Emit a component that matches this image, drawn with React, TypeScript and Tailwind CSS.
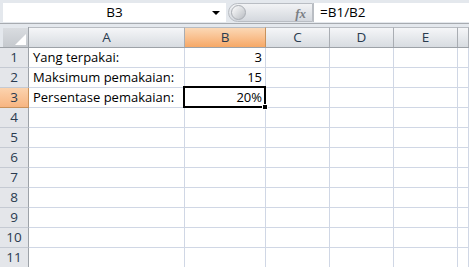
const cols = [
  { name: "A", w: "w-[156px]" },
  { name: "B", w: "w-[81px]" },
  { name: "C", w: "w-[64px]" },
  { name: "D", w: "w-[64px]" },
  { name: "E", w: "w-[64px]" },
  { name: "", w: "flex-1" },
];

const data: Record<number, string[]> = {
  1: ["Yang terpakai:", "3"],
  2: ["Maksimum pemakaian:", "15"],
  3: ["Persentase pemakaian:", "20%"],
};

function Toolbar() {
  return (
    <div className="h-[27px] bg-[#e4e8ed] flex flex-col">
      <div className="flex h-[24px] pt-[3px] border-b border-[#a7abb0]">
        <div className="ml-[3px] w-[223px] h-[19px] bg-white relative flex items-center justify-center text-[13.5px] text-black">
          B3
          <span className="absolute right-[6px] top-[8px] w-0 h-0 border-l-[4px] border-r-[4px] border-t-[4px] border-l-transparent border-r-transparent border-t-black" />
        </div>
        <div className="ml-[2px] w-[85px] h-[19px] flex items-center rounded-l-full bg-gradient-to-b from-[#f2f3f5] to-[#d4d8de] border border-[#b9bdc3] relative">
          <span className="ml-[2px] w-[15px] h-[15px] rounded-full bg-gradient-to-br from-[#ffffff] to-[#b8bcc2] border border-[#a9adb3]" />
          <span className="absolute right-[6px] top-[0px] text-[13px] italic font-bold text-[#7a7e84] font-['Liberation_Serif',serif]">
            fx
          </span>
        </div>
        <div className="flex-1 h-[19px] bg-white border-l border-[#b9bdc3] pl-[6px] flex items-center text-[13.5px] text-black">
          =B1/B2
        </div>
      </div>
    </div>
  );
}

function HeaderRow() {
  return (
    <div className="flex h-[21px] border-b border-[#9da2a8]">
      <div className="w-[29px] border-r border-[#9da2a8] bg-[#e4e8ed] pl-[3px] pt-[1px]">
        <div className="w-full h-full bg-gradient-to-b from-[#d9dce0] to-[#c5c9ce] relative overflow-hidden">
          <span className="absolute right-[2px] bottom-[2px] w-0 h-0 border-b-[11px] border-b-white border-l-[11px] border-l-transparent" />
        </div>
      </div>
      {cols.map((c, i) => (
        <div
          key={i}
          className={`${c.w} flex items-center justify-center border-r border-t border-t-[#b8bcc2] text-[13.5px] text-[#2a3b4f] ${
            c.name === "B"
              ? "bg-gradient-to-b from-[#fbd8b5] to-[#f6a866] border-r-[#c8925c]"
              : "bg-gradient-to-b from-[#f5f6f8] to-[#d8dce1] border-r-[#a9adb3]"
          }`}
        >
          {c.name}
        </div>
      ))}
    </div>
  );
}

function Row({ n }: { n: number }) {
  const vals = data[n] || [];
  return (
    <div className="flex h-[20px]">
      <div
        className={`w-[29px] flex items-center justify-center border-r border-b text-[13.5px] text-[#2a3b4f] ${
          n === 3
            ? "bg-gradient-to-b from-[#fbd3ae] to-[#f7b581] border-r-[#c8925c] border-b-[#c8925c]"
            : "bg-[#e4e6ea] border-r-[#9da2a8] border-b-[#c5cad3]"
        }`}
      >
        {n}
      </div>
      {cols.map((c, i) => {
        const sel = n === 3 && i === 1;
        return (
          <div
            key={i}
            className={`${c.w} relative border-r border-b border-[#d0d7e5] bg-white flex items-center text-[13px] text-black ${
              i === 1 ? "justify-end pr-[3px]" : "pl-[4px]"
            } ${sel ? "z-10" : ""}`}
          >
            {sel && (
              <>
                <span className="absolute left-[-2px] top-[-2px] right-[-1px] bottom-[-1px] border-2 border-black pointer-events-none" />
                <span className="absolute right-[-3px] bottom-[-3px] w-[6px] h-[6px] bg-black border border-white" />
              </>
            )}
            <span className="relative">{vals[i] ?? ""}</span>
          </div>
        );
      })}
    </div>
  );
}

export default function App() {
  return (
    <div className="w-[469px] h-[267px] overflow-hidden bg-white font-['Open_Sans',sans-serif]">
      <Toolbar />
      <HeaderRow />
      {Array.from({ length: 11 }, (_, i) => (
        <Row key={i} n={i + 1} />
      ))}
    </div>
  );
}
